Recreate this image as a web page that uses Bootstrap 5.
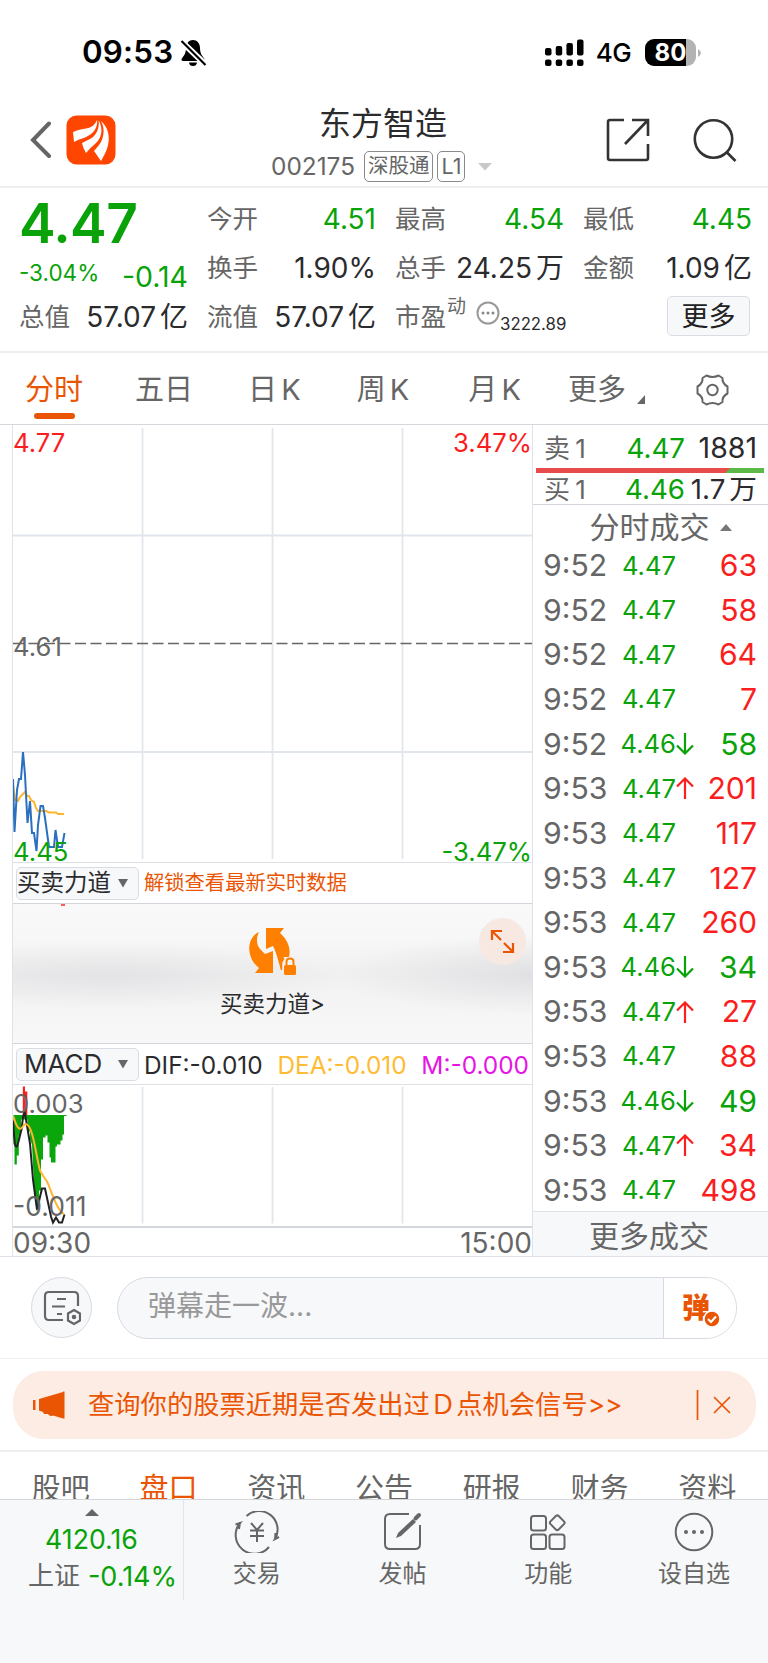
<!DOCTYPE html>
<html lang="zh-CN">
<head>
<meta charset="utf-8">
<meta name="viewport" content="width=device-width, initial-scale=1">
<title>东方智造 002175</title>
<link rel="stylesheet" href="https://cdn.jsdelivr.net/npm/bootstrap@5.3.0/dist/css/bootstrap.min.css">
<style>
  :root { --ink:#2b2b2d; --gray:#666; --up:#fa1e1e; --down:#09a309; --brand:#ea5504; --line:#dfe2e8; --soft:#f6f8fa; }
  body { width:768px; height:1663px; overflow:hidden; margin:0; background:#fff; color:var(--ink);
         font-family:Inter,"Noto Sans CJK SC",sans-serif; line-height:1; font-weight:400; }
  .ink { color:var(--ink); } .gray { color:var(--gray); } .up { color:var(--up); } .down { color:var(--down); } .brand { color:var(--brand); }
  svg { display:block; flex:none; }
  .status-bar { height:93px; padding:0 67px 0 82px; }
  .status-bar .inner { height:105px; }
  .clock { font-size:31.3px; font-weight:600; color:#000; letter-spacing:.2px; padding-top:1px; }
  .net { font-size:26px; font-weight:500; color:#000; letter-spacing:-.6px; }
  .battery { width:51px; height:27px; border-radius:9px; background:linear-gradient(90deg,#000 41px,#b3b3b3 41px); color:#fff; font-size:24px; font-weight:700; }
  .head { height:95px; border-bottom:2px solid #eee; padding:0 30px; }
  .head-title { font-size:32px; line-height:36px; padding:13px 0 0 47px; }
  .head-sub { font-size:24.4px; height:31px; margin-top:9px; margin-left:-1px; }
  .tagbox { border:1px solid #8a8a8a; border-radius:5px; height:31px; font-size:20.5px; padding:0 3px; }
  .quote { height:165px; border-bottom:2px solid #eee; padding:6px 16px 0 19px; }
  .quote-cols { display:grid; grid-template-columns:repeat(4,169px); justify-content:space-between; }
  .qrow { height:49px; white-space:nowrap; }
  .qlab { font-size:25.5px; color:var(--gray); }
  .qval { font-size:28px; }
  .price { font-size:55px; font-weight:600; letter-spacing:-.6px; }
  .btn-more { width:83px; height:40px; border:1px solid #d9dce3; border-radius:5px; background:var(--soft); font-size:27px; color:#222; }
  .period { height:72px; border-bottom:1px solid #d4d7dc; padding-top:2px; word-spacing:-4px; }
  .period span { font-size:29px; white-space:nowrap; }
  .p-on::after { content:""; position:absolute; left:9px; width:41px; height:6px; border-radius:3px; background:var(--brand); top:38px; }
  .board { height:832px; border-bottom:1px solid var(--line); padding-left:12px; }
  .left { width:521px; border-left:1px solid var(--line); border-right:1px solid var(--line); }
  .over { position:absolute; font-size:25.7px; }
  .selrow { height:41px; padding-left:3px; }
  .pick { width:123px; height:33px; border:1px solid #d9dce3; border-radius:5px; background:var(--soft); white-space:nowrap; }
  .lock { height:141px; border-top:1px solid #d3d5dc; border-bottom:1px solid #d3d5dc;
    background:radial-gradient(ellipse 230px 34px at 95px 72px,rgba(215,215,218,.5),rgba(215,215,218,0)),
      radial-gradient(ellipse 190px 40px at 520px 71px,rgba(212,212,215,.55),rgba(212,212,215,0)),
      linear-gradient(180deg,#f9f9f9 0,#f7f7f7 25%,#f0f0f1 50%,#f4f4f5 68%,#f8f8f8 100%); }
  .expand { right:6px; top:14px; width:47px; height:47px; background:#f7e8e1; border-radius:50%; }
  .trades { width:235px; }
  .trades .bidask { font-size:27.7px; }
  .trades .side { font-size:26px; word-spacing:-2px; }
  .tick { height:44.64px; font-size:30.2px; display:grid; grid-template-columns:69px 64px 20px 1fr; align-items:center; padding:0 11px 0 10px; }
  .tick .tp { font-size:25.6px; text-align:right; }
  .tick .vol { text-align:right; letter-spacing:-.1px; }
  .more-trades { height:45px; border-top:1px solid var(--line); background:var(--soft); font-size:30px; }
  .danmu { height:102px; border-bottom:1px solid #eee; padding:20px 31px 0; }
  .round-btn { width:61px; height:61px; border:1px solid #d8dae1; border-radius:50%; background:var(--soft); }
  .inputbar { margin-left:25px; width:620px; height:62px; border:1px solid #d8dae1; border-radius:31px; background:var(--soft); overflow:hidden; }
  .inputbar .txt { font-size:28px; color:#999; padding-left:30px; padding-bottom:5px; }
  .inputbar .end { width:73px; height:60px; background:#fff; border-left:1px solid #d8dae1; }
  .notice-wrap { height:93px; border-bottom:2px solid #eee; padding:12px 12px 0 13px; }
  .notice { height:68px; border-radius:31px; background:#fdece4; }
  .notice .msg { font-size:26.3px; white-space:nowrap; }
  .info-tabs { height:47px; overflow:hidden; padding:0 7px; }
  .info-tabs div { width:107.8px; text-align:center; font-size:29px; line-height:74px; }
  .dock { height:164px; background:var(--soft); border-top:1px solid #d4d6da; }
  .dock-index { width:184px; height:100px; border-right:1px solid #e3e5e8; }
  .dock-item { width:145.7px; font-size:24px; }
</style>
</head>
<body>
<div class="status-bar"><div class="inner d-flex align-items-center">
  <span class="clock">09:53</span>
  <svg style="margin-left:7px" width="27" height="28" viewBox="0 0 27 28"><path d="M13 1C9 1 6 4.500 6 9C6 15 3.500 17 1.500 20Q1 22 3 22H23Q25 22 24.500 20C22.500 17 20 15 20 9C20 4.500 17 1 13 1ZM9 23.500H17Q16.500 27 13 27Q9.500 27 9 23.500Z"/><path d="M1 2L26 26" stroke="#fff" stroke-width="6"/><path d="M1.500 2L25.500 26" stroke="#000" stroke-width="2.200"/></svg>
  <svg class="ms-auto" width="40" height="28" viewBox="0 0 40 28"><g><rect x="1" y="9" width="6.500" height="7.500" rx="2"/><rect x="11.700" y="7" width="6.500" height="9.500" rx="2"/><rect x="22.400" y="4" width="6.500" height="12.500" rx="2"/><rect x="33" y="0.500" width="6.500" height="16" rx="2"/><rect x="1" y="20.500" width="6.500" height="6.500" rx="2"/><rect x="11.700" y="20.500" width="6.500" height="6.500" rx="2"/><rect x="22.400" y="20.500" width="6.500" height="6.500" rx="2"/><rect x="33" y="20.500" width="6.500" height="6.500" rx="2"/></g></svg>
  <span class="net" style="margin-left:12px">4G</span>
  <div class="battery d-flex align-items-center justify-content-center" style="margin-left:14px">80</div>
  <svg width="5" height="8" viewBox="0 0 5 8"><path d="M2 0Q8 4 2 8Z" fill="#b3b3b3"/></svg>
</div></div>

<div class="head d-flex">
  <div class="d-flex align-items-center" style="width:242px">
    <svg width="22" height="38" viewBox="0 0 22 38"><path d="M19 2.500L3 19L19 35" fill="none" stroke="#666" stroke-width="4" stroke-linecap="round"/></svg>
    <svg style="margin-left:14px" width="50" height="50" viewBox="0 0 50 50"><rect x=".5" y=".5" width="49" height="49" rx="10" fill="#ff4600"/><g fill="#fff"><path d="M31 5C29 9 27 13 17 14Q11 15 7 17L8 27Q13 24 18 23C28 19 32 12 31 5Z"/><path d="M32.500 5C34 13 30 21 24 24L16 28Q17 33 20 38Q25 32 29 29C38 21 36 11 32.500 5Z"/><path d="M35 6C40 15 37 25 33 30L28 36L35 46Q39 39 41 34C45 22 42 12 35 6Z"/></g></svg>
  </div>
  <div>
    <div class="head-title">东方智造</div>
    <div class="head-sub d-flex align-items-center gray">
      <span>002175</span>
      <span class="tagbox d-flex align-items-center" style="margin-left:9px">深股通</span>
      <span class="tagbox d-flex align-items-center ms-1" style="font-size:21.500px">L1</span>
      <svg style="margin-left:13px" width="14" height="8" viewBox="0 0 14 8"><path d="M0 0H14L7 7.500Z" fill="#c8c8c8"/></svg>
    </div>
  </div>
  <div class="ms-auto d-flex align-items-center" style="padding:1px 1px 0 0">
    <svg width="44" height="44" viewBox="0 0 44 44" fill="none" stroke="#333" stroke-width="2.600"><path d="M18 2H4Q2 2 2 4V40Q2 42 4 42H40Q42 42 42 40V26"/><path d="M26 2H42V18M42 2L19 26"/></svg>
    <svg style="margin-left:43px" width="44" height="44" viewBox="0 0 44 44" fill="none" stroke="#333" stroke-width="2.600"><circle cx="20.500" cy="21" r="18.700"/><path d="M33.500 34L42.500 43"/></svg>
  </div>
</div>

<div class="quote">
  <div class="quote-cols">
    <div>
      <div class="price down d-flex align-items-center" style="height:58px">4.47</div>
      <div class="d-flex align-items-center justify-content-between down" style="height:40px"><span style="font-size:22.500px;padding-top:3px">-3.04%</span><span style="font-size:28.500px;padding-top:10px">-0.14</span></div>
      <div class="qrow d-flex align-items-center justify-content-between"><span class="qlab">总值</span><span class="qval ink">57.07<span class="ms-1">亿</span></span></div>
    </div>
    <div>
      <div class="qrow d-flex align-items-center justify-content-between"><span class="qlab">今开</span><span class="qval down">4.51</span></div>
      <div class="qrow d-flex align-items-center justify-content-between"><span class="qlab">换手</span><span class="qval ink">1.90%</span></div>
      <div class="qrow d-flex align-items-center justify-content-between"><span class="qlab">流值</span><span class="qval ink">57.07<span class="ms-1">亿</span></span></div>
    </div>
    <div>
      <div class="qrow d-flex align-items-center justify-content-between"><span class="qlab">最高</span><span class="qval down">4.54</span></div>
      <div class="qrow d-flex align-items-center justify-content-between"><span class="qlab">总手</span><span class="qval ink">24.25<span class="ms-1">万</span></span></div>
      <div class="qrow d-flex align-items-center"><span class="qlab">市盈</span><span class="gray" style="font-size:19px;margin:-21px 0 0 1px">动</span>
        <svg style="margin:-8px 0 0 10px" width="24" height="24" viewBox="0 0 24 24"><circle cx="12" cy="12" r="10.500" fill="none" stroke="#999" stroke-width="2"/><g fill="#888"><circle cx="7" cy="12" r="1.500"/><circle cx="12" cy="12" r="1.500"/><circle cx="17" cy="12" r="1.500"/></g></svg>
        <span class="ink ms-auto" style="font-size:16.800px;margin:15px 0 0 -4px">3222.89</span></div>
    </div>
    <div>
      <div class="qrow d-flex align-items-center justify-content-between"><span class="qlab">最低</span><span class="qval down">4.45</span></div>
      <div class="qrow d-flex align-items-center justify-content-between"><span class="qlab">金额</span><span class="qval ink">1.09<span class="ms-1">亿</span></span></div>
      <div class="qrow d-flex align-items-center justify-content-end"><div class="btn-more d-flex align-items-center justify-content-center" style="margin:-1px 2px 0 0">更多</div></div>
    </div>
  </div>
</div>

<div class="period d-flex align-items-center gray">
  <span class="position-relative brand p-on" style="margin-left:25px">分时</span>
  <span style="margin-left:52px">五日</span>
  <span style="margin-left:55px">日 K</span>
  <span style="margin-left:56px">周 K</span>
  <span style="margin-left:59px">月 K</span>
  <span style="margin-left:47px">更多</span>
  <svg style="margin:20px 0 0 11px" width="8" height="9" viewBox="0 0 8 9"><path d="M8 0V9H0Z" fill="#666"/></svg>
  <svg class="ms-auto" style="margin-right:39px" width="33" height="32" viewBox="0 0 33 32" fill="none" stroke="#666" stroke-width="2"><path d="M10.500 1.500Q16.500 4.500 22.500 1.500L26.500 4Q26 9.500 31.500 12.500V19.500Q26 22.500 26.500 28L22.500 30.500Q16.500 27.500 10.500 30.500L6.500 28Q7 22.500 1.500 19.500V12.500Q7 9.500 6.500 4Z" stroke-linejoin="round"/><circle cx="16.500" cy="16" r="5.200"/></svg>
</div>

<div class="board d-flex">
  <div class="left">
    <div class="position-relative" style="height:437px">
      <svg width="519" height="437" viewBox="13 425 519 437" fill="none">
        <g stroke="#e1e5ec" stroke-width="1.800"><path d="M142.500 428V859M272.500 428V859M402.500 428V859M13 535.500H532M13 752H532"/></g>
        <path d="M13 643.500H532" stroke="#666" stroke-width="1.300" stroke-dasharray="11 4.500"/>
        <path d="M13 785L15 800L18 801L20 797L22 795L25 792L27 796H29L31 800L34 802L36 808L38 811H46L49 812.500H56L58 814H64" stroke="#ffb52e" stroke-width="2"/>
        <path d="M13 779L14.500 832L17 790L19 779H21L23 752L25 775L27.500 823L30 801L32 833H34L36.500 851L38 825L40.500 806H43L45 818L49 847H54L55.500 830L58 847H62L64.500 833" stroke="#2b70c0" stroke-width="2"/>
      </svg>
      <span class="over up" style="left:0;top:5px">4.77</span><span class="over up" style="right:0;top:5px">3.47%</span>
      <span class="over gray" style="left:0;top:209px">4.61</span>
      <span class="over down" style="left:0;top:414px">4.45</span><span class="over down" style="right:0;top:414px">-3.47%</span>
    </div>
    <div class="selrow d-flex align-items-center border-top">
      <div class="pick d-flex align-items-center" style="font-size:23.500px">买卖力道<svg style="margin-left:7px" width="10" height="9" viewBox="0 0 10 9"><path d="M0 0H10L5 8.500Z" fill="#666"/></svg></div>
      <span class="brand" style="font-size:20.300px;margin-left:5px;padding-top:1px">解锁查看最新实时数据</span>
    </div>
    <div class="lock position-relative d-flex flex-column align-items-center">
      <svg class="position-absolute" style="left:48px;top:0" width="4" height="2"><rect width="4" height="2" fill="#ff5a5a"/></svg>
      <svg style="margin-top:23px" width="50" height="50" viewBox="0 0 50 50"><g fill="#ff8000"><path d="M11 5C8 11 8 18 13 23L17 27L25 24V46H7L11 41C-2 31-2 11 11 5Z"/><path d="M18 1H36L32 6C40 13 43 22 41 30L36 32L33 36V43C31 37 29 27 25 19L18 22Z"/></g><path d="M33 44V36L36 30H43V36" fill="#f5f5f6"/><path d="M33.500 43V36L36 31" stroke="#ff8000" fill="none" stroke-width="1.500"/><rect x="36" y="38" width="12" height="10" rx="1.500" fill="#ff8000"/><path d="M38.500 38V34.500Q38.500 31.500 42 31.500T45.500 34.500V38" fill="none" stroke="#ff8000" stroke-width="2"/></svg>
      <span style="font-size:22.500px;margin-top:16px">买卖力道&gt;</span>
      <div class="expand position-absolute d-flex align-items-center justify-content-center"><svg width="25" height="25" viewBox="0 0 25 25" fill="none" stroke="#ea5504" stroke-width="2.200"><path d="M2 11V2H12M2 2L11 11M23 14V23H13M23 23L14 14"/></svg></div>
    </div>
    <div class="selrow d-flex align-items-center border-bottom" style="white-space:nowrap">
      <div class="pick d-flex align-items-center justify-content-between" style="font-size:26px;padding:0 10px 0 7px">MACD<svg width="10" height="9" viewBox="0 0 10 9"><path d="M0 0H10L5 8.500Z" fill="#666"/></svg></div>
      <span class="d-flex justify-content-between flex-fill" style="font-size:24.400px;margin-left:5px;padding:2px 3px 0 0"><span>DIF:-0.010</span><span style="color:#ffbb33">DEA:-0.010</span><span style="color:#e516e5">M:-0.000</span></span>
    </div>
    <div class="position-relative" style="height:143px;border-bottom:2px solid #d3d6db">
      <svg width="519" height="141" viewBox="13 1085.500 519 141" fill="none">
        <path d="M142.500 1087.500V1224M272.500 1087.500V1224M402.500 1087.500V1224" stroke="#e1e5ec" stroke-width="1.800"/>
        <path d="M13.500 1115.500H66.500V1116.500H64V1135H62.500V1141H60.500V1145H57V1147H55.500V1163H51V1158H49.500V1143H47.500V1136H45.500V1138H43V1160H41V1191H39V1205L36.500 1212L34 1185L32 1145L30 1140V1132H27.500V1120H21V1136H18.800V1156H16.800V1165H14.500V1145H13.500Z" fill="#0ba60b"/>
        <path d="M22.800 1087H25V1092H27.300V1115.500H22.800Z" fill="#fa1e1e"/>
        <path d="M13 1121C15 1150 15 1147 17 1147C20 1137 22 1133 23 1118L24.500 1112L26 1120L30 1144L33 1180L37 1210L42 1189H45L51 1217L53 1223L56 1218L59 1223H62L64.500 1215" stroke="#222" stroke-width="2"/>
        <path d="M13.500 1117C16 1126 19 1132 22 1128S26 1123 29 1127C34 1134 36 1156 40 1171C43 1177 45 1178 48 1184C53 1197 56 1207 61 1212L64 1215" stroke="#ffb52e" stroke-width="2"/>
      </svg>
      <span class="over gray" style="left:0;top:6px">0.003</span><span class="over gray" style="left:0;top:108px;font-size:26.500px">-0.011</span>
    </div>
    <div class="d-flex justify-content-between align-items-center gray" style="font-size:28px;height:30px">
      <span>09:30</span><span>15:00</span>
    </div>
  </div>
  <div class="trades">
    <div class="bidask d-flex align-items-center" style="height:43px;padding:4px 11px 0 11px"><span class="gray side">卖 1</span><span class="down ms-auto">4.47</span><span class="text-end" style="width:72px;font-size:28.500px">1881</span></div>
    <div class="d-flex" style="height:5px;margin:0 4px 0 3px;background:linear-gradient(135deg,#e84b4b 137px,#5cb947 137.500px)"></div>
    <div class="bidask d-flex align-items-center" style="height:32px;padding:3px 11px 0 11px;border-bottom:1px solid #d2d5dc"><span class="gray side">买 1</span><span class="down ms-auto">4.46</span><span class="text-end" style="width:72px;white-space:nowrap">1.7<span style="margin-left:4px">万</span></span></div>
    <div class="d-flex align-items-center justify-content-center gray" style="height:38px;padding:6px 0 0 20px;font-size:30px">分时成交<svg style="margin-left:10px" width="12" height="7" viewBox="0 0 12 7"><path d="M0 7H12L6 0Z" fill="#777"/></svg></div>
    <div id="ticks" style="height:668px"></div>
    <div class="more-trades d-flex align-items-center justify-content-center gray" style="padding:4px 3px 0 0">更多成交</div>
  </div>
</div>

<div class="danmu d-flex">
  <div class="round-btn d-flex align-items-center justify-content-center"><svg width="38" height="36" viewBox="0 0 38 36" fill="none" stroke="#666" stroke-width="2.200"><path d="M35 16V6Q35 2 31 2H6Q2 2 2 6V26Q2 30 6 30H20M14 9H23M9 16.500H22M14 24H19"/><path d="M31 20L37 23.500V30.500L31 34L25 30.500V23.500Z"/><circle cx="31" cy="27" r="1.200" fill="#666"/></svg></div>
  <div class="inputbar d-flex align-items-center justify-content-between"><span class="txt">弹幕走一波...</span>
    <div class="end d-flex align-items-center brand position-relative"><span style="font-size:28px;font-weight:900;margin-left:18px">弹</span>
      <svg class="position-absolute" style="left:39px;top:32px" width="18" height="18" viewBox="0 0 18 18"><circle cx="9" cy="9" r="8" fill="#ea5504" stroke="#fff" stroke-width="1.500"/><path d="M5 9L8 12L13 6.500" fill="none" stroke="#fff" stroke-width="2"/></svg></div>
  </div>
</div>

<div class="notice-wrap"><div class="notice d-flex align-items-center brand">
  <svg style="margin-left:19px" width="33" height="28" viewBox="0 0 33 28" fill="#ea5504"><path d="M1 9H3.500V19H1ZM7 8L31 1V0.500H32.500V27.500H31L21 24.500Q18 26 16 23H12L11 21L7 19.500Z"/></svg>
  <span class="msg" style="margin-left:23px">查询你的股票近期是否发出过Ｄ点机会信号&gt;&gt;</span>
  <svg class="ms-auto" style="margin-right:24px" width="36" height="32" viewBox="0 0 36 32" stroke="#ea5504" stroke-width="1.700" fill="none"><path d="M1.500 1V31M18 8L34 24M34 8L18 24"/></svg>
</div></div>

<div class="info-tabs d-flex gray"><div>股吧</div><div class="brand">盘口</div><div>资讯</div><div>公告</div><div>研报</div><div>财务</div><div>资料</div></div>

<div class="dock d-flex gray">
  <div class="dock-index d-flex flex-column align-items-center">
    <svg style="margin-top:9px" width="14" height="7" viewBox="0 0 14 7"><path d="M0 7H14L7 0Z" fill="#666"/></svg>
    <span class="down" style="font-size:26.700px;margin-top:10px">4120.16</span>
    <span class="d-flex align-items-center" style="margin:10px 0 0 22px;white-space:nowrap"><span style="font-size:26px">上证</span><span class="down" style="font-size:27px;margin-left:8px">-0.14%</span></span>
  </div>
  <div class="dock-item d-flex flex-column align-items-center"><svg style="margin-top:11px" width="46" height="42" viewBox="0 0 46 42" fill="none" stroke="#666" stroke-width="2"><path d="M12.500 5A18.500 18.500 0 0 1 41 28L45 26M41 28.500L41.500 22M35 36A18.500 18.500 0 0 1 6 12L1.500 13.500M6 11.500L5 18"/><path d="M17 12L23 19L29 12M23 19V31M16 19.500H30M16 25H30"/></svg><span style="margin-top:9px">交易</span></div>
  <div class="dock-item d-flex flex-column align-items-center"><svg style="margin-top:11px" width="42" height="42" viewBox="0 0 42 42" fill="none" stroke="#666" stroke-width="2"><path d="M27 3H8Q3 3 3 8V33Q3 38 8 38H33Q38 38 38 33V14"/><path d="M14 27L16 22L31 8L34 11L19 25Z" fill="#666" stroke="none"/><path d="M33.500 7.500L37 4" stroke-width="4" stroke-linecap="round"/></svg><span style="margin-top:9px">发帖</span></div>
  <div class="dock-item d-flex flex-column align-items-center"><svg style="margin-top:11px" width="38" height="42" viewBox="0 0 38 42" fill="none" stroke="#666" stroke-width="2"><rect x="2" y="5" width="15" height="14.500" rx="2.500"/><rect x="2" y="23.500" width="15" height="14.500" rx="2.500"/><rect x="20.500" y="23.500" width="15" height="14.500" rx="2.500"/><rect x="22.500" y="6" width="11.500" height="11.500" rx="2" transform="rotate(45 28.250 11.750)"/></svg><span style="margin-top:9px">功能</span></div>
  <div class="dock-item d-flex flex-column align-items-center"><svg style="margin-top:11px" width="42" height="42" viewBox="0 0 42 42"><circle cx="21" cy="21" r="18.300" fill="none" stroke="#666" stroke-width="2"/><g fill="#666"><circle cx="13" cy="21" r="2"/><circle cx="21" cy="21" r="2"/><circle cx="29" cy="21" r="2"/></g></svg><span style="margin-top:9px">设自选</span></div>
</div>

<script src="https://cdn.jsdelivr.net/npm/bootstrap@5.3.0/dist/js/bootstrap.bundle.min.js"></script>
<script>
  // time, price, direction of the last tick, volume, volume colour
  const rows = [
    ['9:52','4.47','',63,'up'],['9:52','4.47','',58,'up'],['9:52','4.47','',64,'up'],['9:52','4.47','',7,'up'],
    ['9:52','4.46','d',58,'down'],['9:53','4.47','u',201,'up'],['9:53','4.47','',117,'up'],['9:53','4.47','',127,'up'],
    ['9:53','4.47','',260,'up'],['9:53','4.46','d',34,'down'],['9:53','4.47','u',27,'up'],['9:53','4.47','',88,'up'],
    ['9:53','4.46','d',49,'down'],['9:53','4.47','u',34,'up'],['9:53','4.47','',498,'up']];
  const arrow = { '':'',
    d:'<svg width="18" height="22" viewBox="0 0 18 22" fill="none" stroke="#09a309" stroke-width="2.200"><path d="M9 0V20M1 12.500L9 20.500L17 12.500"/></svg>',
    u:'<svg width="18" height="22" viewBox="0 0 18 22" fill="none" stroke="#fa1e1e" stroke-width="2.200"><path d="M9 22V2M1 9.500L9 1.500L17 9.500"/></svg>' };
  document.getElementById('ticks').innerHTML = rows.map(r =>
    `<div class="tick"><span class="gray">${r[0]}</span><span class="tp down">${r[1]}</span><span>${arrow[r[2]]}</span><span class="vol ${r[4]}">${r[3]}</span></div>`).join('');
</script>
</body>
</html>
